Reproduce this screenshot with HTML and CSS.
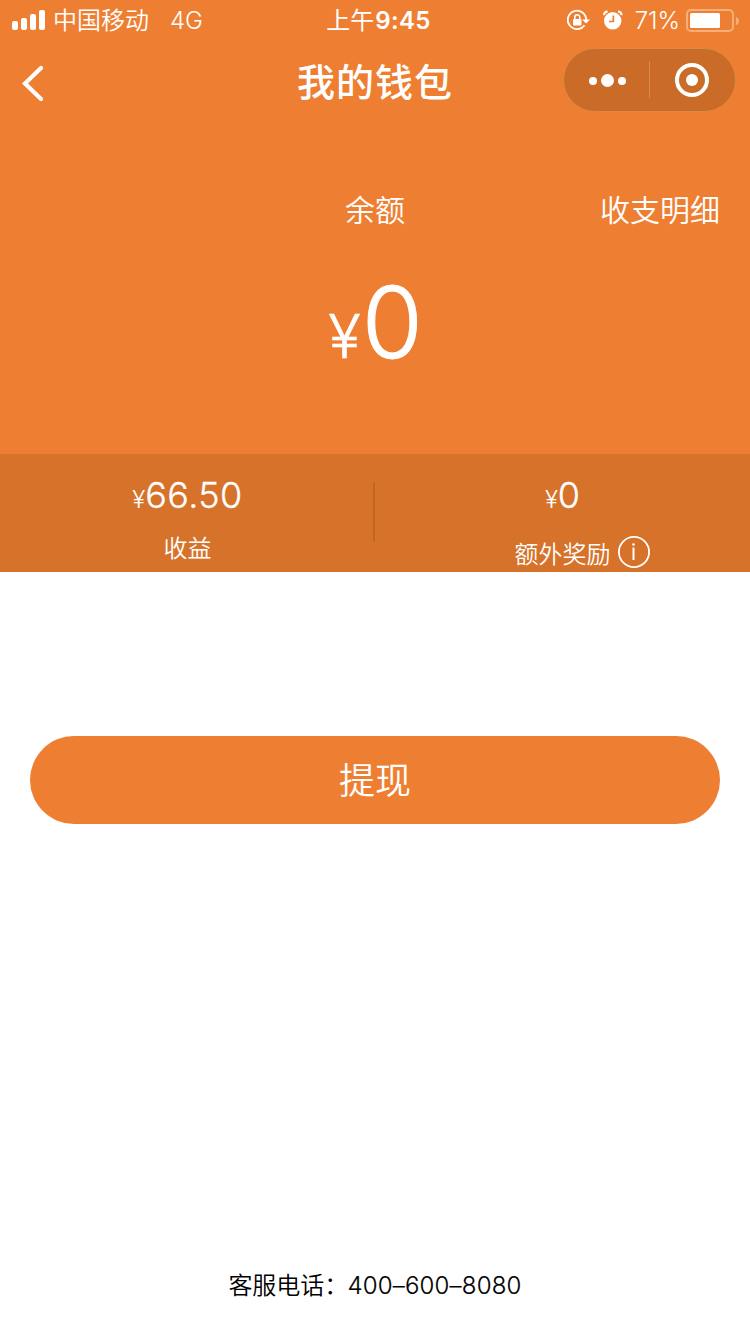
FILE: index.html
```html
<!DOCTYPE html>
<html lang="zh-CN">
<head>
<meta charset="utf-8">
<title>我的钱包</title>
<link rel="stylesheet" href="styles.css">
</head>
<body>
<div class="page">
  <header class="hero">
    <div class="status">
      <div class="status-left">
        <svg class="signal" width="34" height="20" viewBox="0 0 34 20" fill="#fff"><rect x="0" y="11" width="6" height="9" rx="2"/><rect x="9" y="8" width="6" height="12" rx="2"/><rect x="18" y="4" width="6" height="16" rx="2"/><rect x="27" y="0" width="6" height="20" rx="2"/></svg>
        <span class="carrier">中国移动</span>
        <span class="network">4G</span>
      </div>
      <div class="clock"><span class="cjk">上午</span>9:45</div>
      <div class="status-right">
        <svg class="lock" width="24" height="22" viewBox="0 0 24 22"><path d="M17.500 16.200A9.200 9.200 0 1 1 19.200 11" fill="none" stroke="#fff" stroke-width="1.800"/><path d="M15.200 10.500h7.800L19 14.500z" fill="#fff"/><rect x="6" y="10" width="8.500" height="6.500" rx="1" fill="#fff"/><path d="M7.800 10.500V8.300a2.500 2.500 0 0 1 5 0V10.500" fill="none" stroke="#fff" stroke-width="1.500"/></svg>
        <svg class="alarm" width="20" height="20" viewBox="0 0 20 20"><circle cx="9.700" cy="10.800" r="8.700" fill="#fff"/><path d="M10.300 5.500v6H6" fill="none" stroke="#ee7f32" stroke-width="1.700"/><path d="M1.200 5.200C1 2.800 2.300 1.700 4.600 1.700M18.400 5.200c.2-2.400-1.100-3.500-3.400-3.500" fill="none" stroke="#fff" stroke-width="2.200"/></svg>
        <span class="percent">71%</span>
        <svg class="battery" width="54" height="24" viewBox="0 0 54 24"><rect x="1" y="2" width="46" height="21" rx="4" fill="none" stroke="#f6af78" stroke-width="2"/><rect x="4" y="5" width="30" height="15" rx="1.500" fill="#fff"/><path d="M50 9q3 1 3 4t-3 4z" fill="#f6af78"/></svg>
      </div>
    </div>
    <nav class="nav">
      <svg class="back" width="24" height="38" viewBox="0 0 24 38"><path d="M21 4 5 19.500 21 35" fill="none" stroke="#fff" stroke-width="4.200" stroke-linecap="round"/></svg>
      <h1 class="title">我的钱包</h1>
      <div class="capsule">
        <svg width="173" height="64" viewBox="0 0 173 64"><rect x=".5" y=".5" width="172" height="63" rx="31.500" fill="#ca6c28" stroke="#d98845"/><path d="M86.500 13v37" stroke="#d98b4e"/><g fill="#fff"><circle cx="30" cy="33" r="4"/><circle cx="44.500" cy="32.500" r="6.500"/><circle cx="59" cy="33" r="4"/><circle cx="129" cy="32" r="6"/></g><circle cx="129" cy="32" r="15" fill="none" stroke="#fff" stroke-width="4"/></svg>
      </div>
    </nav>
    <div class="labels">
      <span class="label-main">余额</span>
      <a class="label-link">收支明细</a>
    </div>
    <div class="balance"><span class="balance-yen">¥</span>0</div>
  </header>
  <section class="stats">
    <div class="stat">
      <div class="amount"><span class="yen">¥</span><span class="income">66.50</span></div>
      <div class="caption">收益</div>
    </div>
    <div class="stat stat-bonus">
      <div class="amount"><span class="yen">¥</span>0</div>
      <div class="caption caption-info"><span>额外奖励</span>
        <svg class="info" width="32" height="32" viewBox="0 0 32 32"><circle cx="16" cy="16" r="15.100" fill="none" stroke="#fff" stroke-width="1.800"/><circle cx="15.500" cy="8.500" r="1.300" fill="#fff"/><path d="M15.500 11.500v12.500" stroke="#fff" stroke-width="2"/></svg>
      </div>
    </div>
  </section>
  <main class="content">
    <button class="withdraw">提现</button>
  </main>
  <footer class="service"><span>客服电话：</span><span class="phone">400–600–8080</span></footer>
</div>
</body>
</html>
```
FILE: styles.css
```css
* { box-sizing: border-box; }
body {
  margin: 0;
  background: #fff;
  color: #fff;
  font-family: Inter, "Noto Sans CJK SC", sans-serif;
  font-weight: 350;
}
svg { display: block; flex: none; }
.page { width: 750px; height: 1334px; display: flex; flex-direction: column; overflow: hidden; }
.hero { height: 454px; background: #ee7f32; }
.status {
  height: 40px;
  padding-top: 2px;
  display: grid;
  grid-template-columns: 300px 1fr 300px;
  align-items: center;
  font-size: 24px;
  line-height: 38px;
  white-space: nowrap;
}
.signal, .lock, .alarm, .battery { margin-top: -2px; }
.status-left { display: flex; align-items: center; padding-left: 12px; }
.carrier { margin-left: 7px; }
.network { margin-left: 21px; }
.clock { display: flex; justify-content: center; font-weight: 600; letter-spacing: .4px; padding-left: 7px; }
.clock .cjk { font-weight: 400; letter-spacing: 0; margin-right: 1px; }
.status-right { display: flex; align-items: center; justify-content: flex-end; padding-right: 10px; }
.alarm { margin-left: 12px; }
.percent { margin-left: 12px; }
.battery { margin-left: 6px; }
.nav { height: 88px; display: grid; grid-template-columns: 200px 1fr 200px; align-items: start; }
.back { margin: 24px 0 0 20px; }
.title { margin: 0; padding-top: 14px; text-align: center; font-size: 38px; line-height: 56px; font-weight: 500; letter-spacing: 1px; }
.capsule { margin: 8px 0 0 13px; }
.labels {
  display: grid;
  grid-template-columns: 200px 1fr 200px;
  margin-top: 60px;
  font-size: 30px;
  line-height: 44px;
}
.label-main { grid-column: 2; text-align: center; }
.label-link { text-align: right; padding-right: 30px; }
.balance { display: flex; justify-content: center; align-items: baseline; margin-top: 30px; padding-left: 1px; font-size: 99px; line-height: 120px; font-weight: 300; -webkit-text-stroke: 1px #fff; }
.balance-yen { font-size: 60px; margin-right: 1px; -webkit-text-stroke-width: .5px; }
.stats { height: 118px; display: flex; background: #d67229; }
.stat { flex: 1; display: flex; flex-direction: column; align-items: center; padding-top: 19px; }
.stat-bonus { position: relative; }
.stat-bonus::before { content: ""; position: absolute; left: -2px; top: 28px; width: 2px; height: 60px; background: #c16625; }
.amount { display: flex; align-items: baseline; font-size: 36px; line-height: 44px; font-weight: 300; -webkit-text-stroke: .3px #fff; }
.yen { font-size: 24px; -webkit-text-stroke-width: 0; }
.income { letter-spacing: .4px; }
.caption { margin-top: 9px; font-size: 24px; line-height: 36px; }
.caption-info { display: flex; align-items: center; gap: 7px; height: 36px; margin: 15px 0 0 39px; }
.info { margin-top: -7px; }
.content { padding: 164px 30px 0; }
.withdraw {
  display: block;
  width: 100%;
  height: 88px;
  border: 0;
  border-radius: 44px;
  background: #ee7f32;
  color: #fff;
  font: 350 36px/88px Inter, "Noto Sans CJK SC", sans-serif;
}
.service {
  margin-top: auto;
  padding-bottom: 30px;
  display: flex;
  justify-content: center;
  color: #000;
  font-size: 24px;
  line-height: 36px;
}
.phone { font-weight: 300; letter-spacing: .2px; margin-left: -1px; -webkit-text-stroke: .2px #000; }
```
